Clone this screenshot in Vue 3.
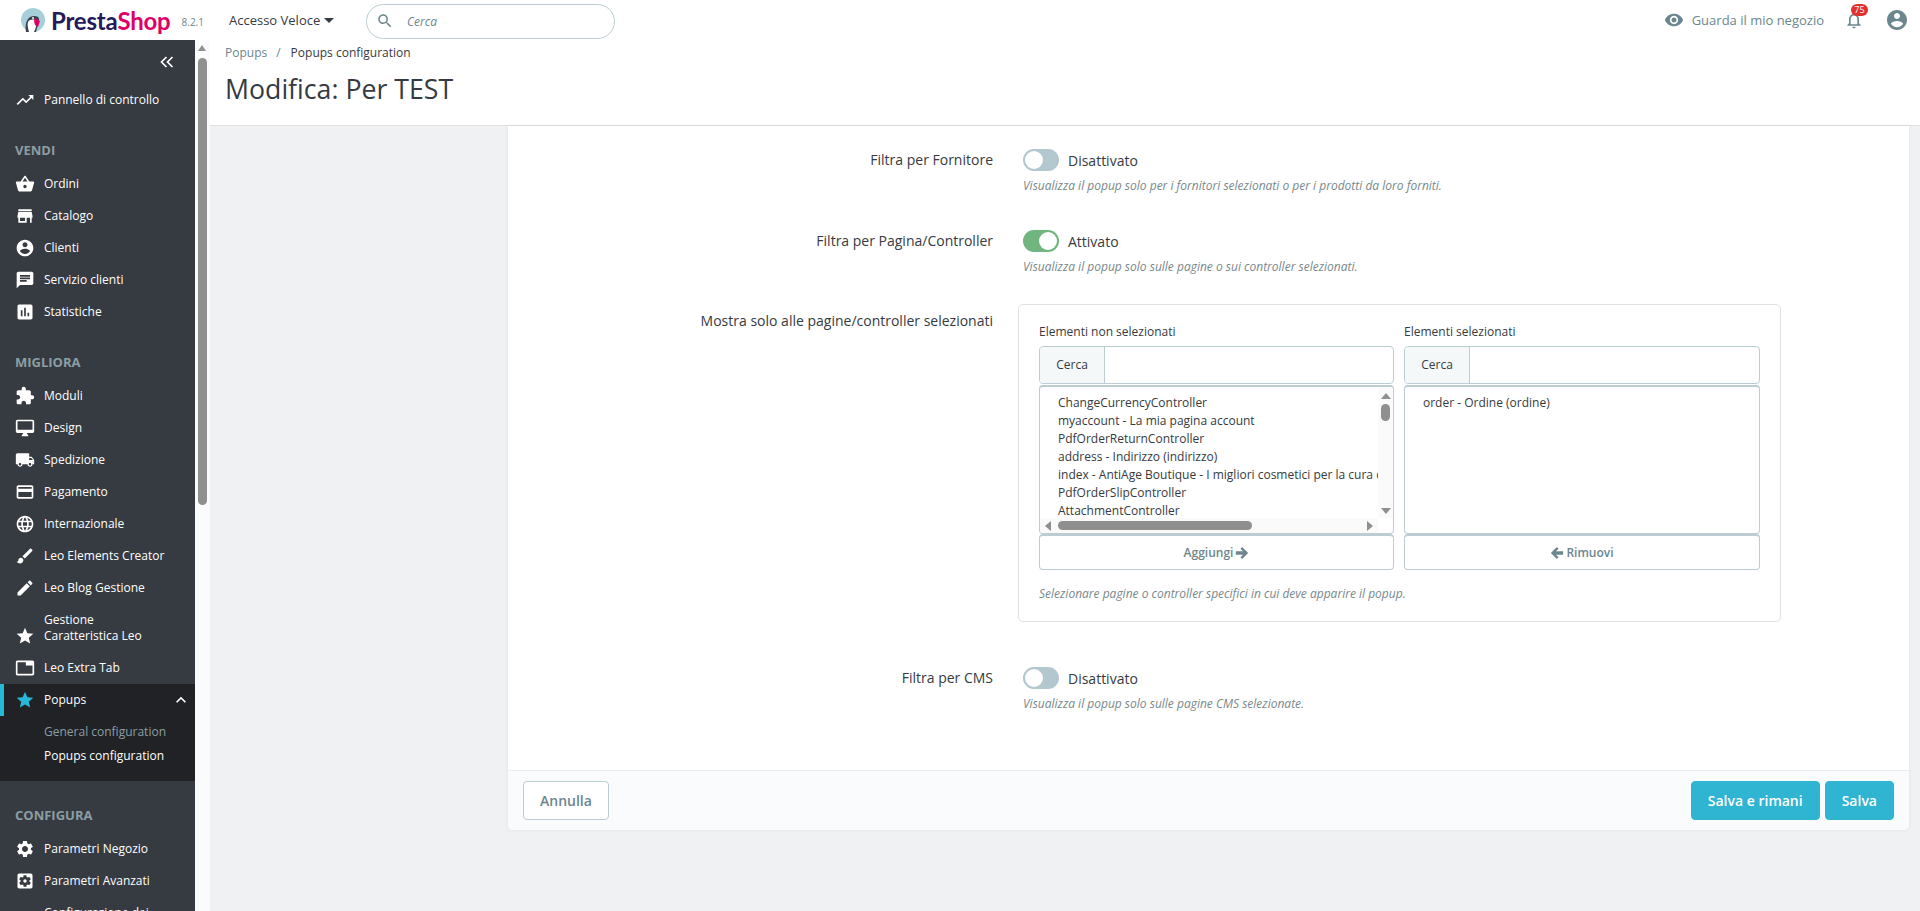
<template>
  <div class="app">
    <header class="topbar">
      <div class="logo">
        <svg class="puffin" width="24" height="24" viewBox="0 0 24 24">
          <circle cx="12" cy="12" r="12" fill="#a5d0da" />
          <path d="M5 24c-1-6 0-10 2-13 2-3 7-4 10-2 1 1 1 2 1 3l-3 12z" fill="#3b3f4a" />
          <path d="M7 14c2-3 6-3 8-1 1 3 0 7-2 11H8c-1-4-2-7-1-10z" fill="#fff" />
          <path d="M14 10l5 3-2 6-3-2-1-4z" fill="#df0067" />
          <circle cx="12" cy="10" r="1" fill="#fff" />
        </svg>
        <span class="logo-text"><span class="presta">Presta</span><span class="shop">Shop</span></span>
        <span class="version">8.2.1</span>
      </div>
      <div class="quick">Accesso Veloce<span class="caret"></span></div>
      <div class="search">
        <svg width="18" height="18" viewBox="0 0 24 24"><path :d="icons.search" fill="#6c868e" /></svg>
        <span>Cerca</span>
      </div>
      <div class="top-right">
        <svg class="eye" width="20" height="20" viewBox="0 0 24 24"><path :d="icons.eye" fill="#6c868e" /></svg>
        <span class="shop-link">Guarda il mio negozio</span>
        <div class="bell">
          <svg width="20" height="20" viewBox="0 0 24 24"><path :d="icons.bell" fill="#6c868e" /></svg>
          <span class="badge">75</span>
        </div>
        <svg class="account" width="24" height="24" viewBox="0 0 24 24"><path :d="icons.account" fill="#6c868e" /></svg>
      </div>
    </header>

    <div class="below">
      <aside class="sidebar">
        <div class="collapse">
          <svg width="16" height="16" viewBox="0 0 16 16" fill="none" stroke="#fff" stroke-width="1.7"><path d="M7.5 3L2.5 8l5 5M13.5 3l-5 5 5 5" /></svg>
        </div>
        <template v-for="entry in nav" :key="entry.label">
          <div v-if="entry.section" class="section">{{ entry.label }}</div>
          <div v-else class="nav-item" :class="{ active: entry.active, tall: entry.tall }">
            <svg width="20" height="20" viewBox="0 0 24 24"><path :d="icons[entry.icon]" fill="currentColor" /></svg>
            <span>{{ entry.label }}</span>
            <svg v-if="entry.active" class="chev" width="20" height="20" viewBox="0 0 24 24"><path :d="icons.up" fill="#fff" /></svg>
          </div>
          <div v-if="entry.active" class="submenu">
            <div class="sub muted">General configuration</div>
            <div class="sub">Popups configuration</div>
          </div>
        </template>
      </aside>
      <div class="side-scroll">
        <span class="arrow-up"></span>
        <span class="side-thumb"></span>
      </div>

      <main class="main">
        <div class="page-head">
          <div class="crumbs"><span class="crumb-link">Popups</span><span class="slash">/</span><span>Popups configuration</span></div>
          <h1>Modifica: Per TEST</h1>
        </div>
        <div class="content">
          <div class="card">
            <div class="form">
              <div class="row">
                <label>Filtra per Fornitore</label>
                <div class="control">
                  <div class="switch-line"><span class="switch"></span>Disattivato</div>
                  <p class="help">Visualizza il popup solo per i fornitori selezionati o per i prodotti da loro forniti.</p>
                </div>
              </div>
              <div class="row second">
                <label>Filtra per Pagina/Controller</label>
                <div class="control">
                  <div class="switch-line"><span class="switch on"></span>Attivato</div>
                  <p class="help">Visualizza il popup solo sulle pagine o sui controller selezionati.</p>
                </div>
              </div>
              <div class="row third">
                <label>Mostra solo alle pagine/controller selezionati</label>
                <div class="picker">
                  <div class="columns">
                    <div class="col">
                      <div class="col-title">Elementi non selezionati</div>
                      <div class="group"><span class="addon">Cerca</span><span class="field"></span></div>
                      <div class="list scrolled">
                        <div class="list-view">
                          <div v-for="item in available" :key="item" class="opt">{{ item }}</div>
                        </div>
                        <div class="v-bar">
                          <span class="arr a-up"></span>
                          <span class="v-thumb"></span>
                          <span class="arr a-down"></span>
                        </div>
                        <div class="h-bar">
                          <span class="arr a-left"></span>
                          <span class="h-thumb"></span>
                          <span class="arr a-right"></span>
                        </div>
                      </div>
                      <button class="move">Aggiungi
                        <svg width="14" height="14" viewBox="0 0 16 16"><path d="M8.2 1.2L15 8l-6.8 6.8-2-2L9.2 10H1V6h8.2L6.2 3.2z" fill="currentColor" /></svg>
                      </button>
                    </div>
                    <div class="col">
                      <div class="col-title">Elementi selezionati</div>
                      <div class="group"><span class="addon">Cerca</span><span class="field"></span></div>
                      <div class="list">
                        <div class="list-view"><div class="opt">order - Ordine (ordine)</div></div>
                      </div>
                      <button class="move">
                        <svg width="14" height="14" viewBox="0 0 16 16"><path d="M7.8 1.2L1 8l6.8 6.8 2-2L6.8 10H15V6H6.8l3-2.8z" fill="currentColor" /></svg>
                        Rimuovi
                      </button>
                    </div>
                  </div>
                  <p class="help picker-help">Selezionare pagine o controller specifici in cui deve apparire il popup.</p>
                </div>
              </div>
              <div class="row fourth">
                <label>Filtra per CMS</label>
                <div class="control">
                  <div class="switch-line"><span class="switch"></span>Disattivato</div>
                  <p class="help">Visualizza il popup solo sulle pagine CMS selezionate.</p>
                </div>
              </div>
            </div>
            <div class="card-footer">
              <button class="btn ghost">Annulla</button>
              <div class="actions">
                <button class="btn primary">Salva e rimani</button>
                <button class="btn primary">Salva</button>
              </div>
            </div>
          </div>
        </div>
      </main>
    </div>
  </div>
</template>

<script setup>
const icons = {
  search: 'M15.5 14h-.79l-.28-.27C15.41 12.59 16 11.11 16 9.5 16 5.91 13.09 3 9.5 3S3 5.91 3 9.5 5.91 16 9.5 16c1.61 0 3.09-.59 4.23-1.57l.27.28v.79l5 4.99L20.49 19l-4.99-5zm-6 0C7.01 14 5 11.99 5 9.5S7.01 5 9.5 5 14 7.01 14 9.5 11.99 14 9.5 14z',
  eye: 'M12 4.5C7 4.5 2.73 7.61 1 12c1.73 4.39 6 7.5 11 7.5s9.27-3.11 11-7.5c-1.73-4.39-6-7.5-11-7.5zM12 17c-2.76 0-5-2.24-5-5s2.24-5 5-5 5 2.24 5 5-2.24 5-5 5zm0-8c-1.66 0-3 1.34-3 3s1.34 3 3 3 3-1.34 3-3-1.34-3-3-3z',
  bell: 'M12 22c1.1 0 2-.9 2-2h-4c0 1.1.9 2 2 2zm6-6v-5c0-3.07-1.63-5.64-4.5-6.32V4c0-.83-.67-1.5-1.5-1.5s-1.5.67-1.5 1.5v.68C7.64 5.36 6 7.92 6 11v5l-2 2v1h16v-1l-2-2zm-2 1H8v-6c0-2.48 1.51-4.5 4-4.5s4 2.02 4 4.5v6z',
  account: 'M12 2C6.48 2 2 6.48 2 12s4.48 10 10 10 10-4.48 10-10S17.52 2 12 2zm0 3c1.66 0 3 1.34 3 3s-1.34 3-3 3-3-1.34-3-3 1.34-3 3-3zm0 14.2c-2.5 0-4.71-1.28-6-3.22.03-1.99 4-3.08 6-3.08 1.99 0 5.97 1.09 6 3.08-1.29 1.94-3.5 3.22-6 3.22z',
  up: 'M7.41 15.41L12 10.83l4.59 4.58L18 14l-6-6-6 6z',
  trend: 'M16 6l2.29 2.29-4.88 4.88-4-4L2 16.59 3.41 18l6-6 4 4 6.3-6.29L22 12V6z',
  basket: 'M17.21 9l-4.38-6.56c-.19-.28-.51-.42-.83-.42-.32 0-.64.14-.83.43L6.79 9H2c-.55 0-1 .45-1 1 0 .09.01.18.04.27l2.54 9.27c.23.84 1 1.46 1.92 1.46h13c.92 0 1.69-.62 1.93-1.46l2.54-9.27L23 10c0-.55-.45-1-1-1h-4.79zM9 9l3-4.4L15 9H9zm3 8c-1.1 0-2-.9-2-2s.9-2 2-2 2 .9 2 2-.9 2-2 2z',
  store: 'M20 4H4v2h16V4zm1 10v-2l-1-5H4l-1 5v2h1v6h10v-6h4v6h2v-6h1zm-9 4H6v-4h6v4z',
  chat: 'M20 2H4c-1.1 0-1.99.9-1.99 2L2 22l4-4h14c1.1 0 2-.9 2-2V4c0-1.1-.9-2-2-2zM6 9h12v2H6V9zm8 5H6v-2h8v2zm4-6H6V6h12v2z',
  stats: 'M19 3H5c-1.1 0-2 .9-2 2v14c0 1.1.9 2 2 2h14c1.1 0 2-.9 2-2V5c0-1.1-.9-2-2-2zM9 17H7v-7h2v7zm4 0h-2V7h2v10zm4 0h-2v-4h2v4z',
  puzzle: 'M20.5 11H19V7c0-1.1-.9-2-2-2h-4V3.5C13 2.12 11.88 1 10.5 1S8 2.12 8 3.5V5H4c-1.1 0-1.99.9-1.99 2v3.8H3.5c1.49 0 2.7 1.21 2.7 2.7s-1.21 2.7-2.7 2.7H2V20c0 1.1.9 2 2 2h3.8v-1.5c0-1.49 1.21-2.7 2.7-2.7 1.49 0 2.7 1.21 2.7 2.7V22H17c1.1 0 2-.9 2-2v-4h1.5c1.38 0 2.5-1.12 2.5-2.5S21.88 11 20.5 11z',
  desktop: 'M21 2H3c-1.1 0-2 .9-2 2v12c0 1.1.9 2 2 2h7l-2 3v1h8v-1l-2-3h7c1.1 0 2-.9 2-2V4c0-1.1-.9-2-2-2zm0 12H3V4h18v10z',
  truck: 'M20 8h-3V4H3c-1.1 0-2 .9-2 2v11h2c0 1.66 1.34 3 3 3s3-1.34 3-3h6c0 1.66 1.34 3 3 3s3-1.34 3-3h2v-5l-3-4zM6 18.5c-.83 0-1.5-.67-1.5-1.5s.67-1.5 1.5-1.5 1.5.67 1.5 1.5-.67 1.5-1.5 1.5zm13.5-9l1.96 2.5H17V9.5h2.5zm-1.5 9c-.83 0-1.5-.67-1.5-1.5s.67-1.5 1.5-1.5 1.5.67 1.5 1.5-.67 1.5-1.5 1.5z',
  card: 'M20 4H4c-1.11 0-1.99.89-1.99 2L2 18c0 1.11.89 2 2 2h16c1.11 0 2-.89 2-2V6c0-1.11-.89-2-2-2zm0 14H4v-6h16v6zm0-10H4V6h16v2z',
  globe: 'M11.99 2C6.47 2 2 6.48 2 12s4.47 10 9.99 10C17.52 22 22 17.52 22 12S17.52 2 11.99 2zm6.93 6h-2.95c-.32-1.25-.78-2.45-1.38-3.56 1.84.63 3.37 1.91 4.33 3.56zM12 4.04c.83 1.2 1.48 2.53 1.91 3.96h-3.82c.43-1.43 1.08-2.76 1.91-3.96zM4.26 14C4.1 13.36 4 12.69 4 12s.1-1.36.26-2h3.38c-.08.66-.14 1.32-.14 2 0 .68.06 1.34.14 2H4.26zm.82 2h2.95c.32 1.25.78 2.45 1.38 3.56-1.84-.63-3.37-1.9-4.33-3.56zm2.95-8H5.08c.96-1.66 2.49-2.93 4.33-3.56C8.81 5.55 8.35 6.75 8.03 8zM12 19.96c-.83-1.2-1.48-2.53-1.91-3.96h3.82c-.43 1.43-1.08 2.76-1.91 3.96zM14.34 14H9.66c-.09-.66-.16-1.32-.16-2 0-.68.07-1.35.16-2h4.68c.09.65.16 1.32.16 2 0 .68-.07 1.34-.16 2zm.25 5.56c.6-1.11 1.06-2.31 1.38-3.56h2.95c-.96 1.65-2.49 2.93-4.33 3.56zM16.36 14c.08-.66.14-1.32.14-2 0-.68-.06-1.34-.14-2h3.38c.16.64.26 1.31.26 2s-.1 1.36-.26 2h-3.38z',
  brush: 'M7 14c-1.66 0-3 1.34-3 3 0 1.31-1.16 2-2 2 .92 1.22 2.49 2 4 2 2.21 0 4-1.79 4-4 0-1.66-1.34-3-3-3zm13.71-9.37l-1.34-1.34c-.39-.39-1.02-.39-1.41 0L9 12.25 11.75 15l8.96-8.96c.39-.39.39-1.02 0-1.41z',
  edit: 'M3 17.25V21h3.75L17.81 9.94l-3.75-3.75L3 17.25zM20.71 7.04c.39-.39.39-1.02 0-1.41l-2.34-2.34c-.39-.39-1.02-.39-1.41 0l-1.83 1.83 3.75 3.75 1.83-1.83z',
  star: 'M12 17.27L18.18 21l-1.64-7.03L22 9.24l-7.19-.61L12 2 9.19 8.63 2 9.24l5.46 4.73L5.82 21z',
  tab: 'M21 3H3c-1.1 0-2 .9-2 2v14c0 1.1.9 2 2 2h18c1.1 0 2-.9 2-2V5c0-1.1-.9-2-2-2zm0 16H3V5h10v4h8v10z',
  gear: 'M19.14 12.94c.04-.3.06-.61.06-.94 0-.32-.02-.64-.07-.94l2.03-1.58c.18-.14.23-.41.12-.61l-1.92-3.32c-.12-.22-.37-.29-.59-.22l-2.39.96c-.5-.38-1.03-.7-1.62-.94l-.36-2.54c-.04-.24-.24-.41-.48-.41h-3.84c-.24 0-.43.17-.47.41l-.36 2.54c-.59.24-1.13.57-1.62.94l-2.39-.96c-.22-.08-.47 0-.59.22L2.74 8.87c-.12.21-.08.47.12.61l2.03 1.58c-.05.3-.09.63-.09.94s.02.64.07.94l-2.03 1.58c-.18.14-.23.41-.12.61l1.92 3.32c.12.22.37.29.59.22l2.39-.96c.5.38 1.03.7 1.62.94l.36 2.54c.05.24.24.41.48.41h3.84c.24 0 .44-.17.47-.41l.36-2.54c.59-.24 1.13-.56 1.62-.94l2.39.96c.22.08.47 0 .59-.22l1.92-3.32c.12-.22.07-.47-.12-.61l-2.01-1.58zM12 15.6c-1.98 0-3.6-1.62-3.6-3.6s1.62-3.6 3.6-3.6 3.6 1.62 3.6 3.6-1.62 3.6-3.6 3.6z',
  gearbox: 'M12 10c-1.1 0-2 .9-2 2s.9 2 2 2 2-.9 2-2-.9-2-2-2zm7-7H5c-1.11 0-2 .9-2 2v14c0 1.1.89 2 2 2h14c1.11 0 2-.9 2-2V5c0-1.1-.89-2-2-2zm-1.75 9c0 .23-.02.46-.05.68l1.48 1.16c.13.11.17.3.08.45l-1.4 2.42c-.09.15-.27.21-.43.15l-1.74-.7c-.36.28-.76.51-1.18.69l-.26 1.85c-.03.17-.18.3-.35.3h-2.8c-.17 0-.32-.13-.35-.29l-.26-1.85c-.43-.18-.82-.41-1.18-.69l-1.74.7c-.16.06-.34 0-.43-.15l-1.4-2.42c-.09-.15-.05-.34.08-.45l1.48-1.16c-.03-.23-.05-.46-.05-.69 0-.23.02-.46.05-.68l-1.48-1.16c-.13-.11-.17-.3-.08-.45l1.4-2.42c.09-.15.27-.21.43-.15l1.74.7c.36-.28.76-.51 1.18-.69l.26-1.85c.03-.17.18-.3.35-.3h2.8c.17 0 .32.13.35.29l.26 1.85c.43.18.82.41 1.18.69l1.74-.7c.16-.06.34 0 .43.15l1.4 2.42c.09.15.05.34-.08.45l-1.48 1.16c.03.23.05.46.05.69z'
}

const nav = [
  { label: 'Pannello di controllo', icon: 'trend' },
  { label: 'Vendi', section: true },
  { label: 'Ordini', icon: 'basket' },
  { label: 'Catalogo', icon: 'store' },
  { label: 'Clienti', icon: 'account' },
  { label: 'Servizio clienti', icon: 'chat' },
  { label: 'Statistiche', icon: 'stats' },
  { label: 'Migliora', section: true },
  { label: 'Moduli', icon: 'puzzle' },
  { label: 'Design', icon: 'desktop' },
  { label: 'Spedizione', icon: 'truck' },
  { label: 'Pagamento', icon: 'card' },
  { label: 'Internazionale', icon: 'globe' },
  { label: 'Leo Elements Creator', icon: 'brush' },
  { label: 'Leo Blog Gestione', icon: 'edit' },
  { label: 'Gestione Caratteristica Leo', icon: 'star', tall: true },
  { label: 'Leo Extra Tab', icon: 'tab' },
  { label: 'Popups', icon: 'star', active: true },
  { label: 'Configura', section: true },
  { label: 'Parametri Negozio', icon: 'gear' },
  { label: 'Parametri Avanzati', icon: 'gearbox' },
  { label: 'Configurazione dei pagamenti', icon: 'gear', tall: true }
]

const available = [
  'ChangeCurrencyController',
  'myaccount - La mia pagina account',
  'PdfOrderReturnController',
  'address - Indirizzo (indirizzo)',
  'index - AntiAge Boutique - I migliori cosmetici per la cura della pelle',
  'PdfOrderSlipController',
  'AttachmentController'
]
</script>

<style>
html, body {
  margin: 0;
  background: #eff1f2;
}
</style>

<style scoped>
.app {
  height: 911px;
  overflow: hidden;
  font-family: "Open Sans", "Noto Sans", sans-serif;
  font-size: 14px;
  color: #363a41;
}

/* header */
.topbar {
  height: 40px;
  background: #fff;
  display: flex;
  align-items: center;
  position: relative;
}

.logo {
  display: flex;
  align-items: center;
  padding-left: 21px;
  width: 229px;
  box-sizing: border-box;
  flex-shrink: 0;
}

.logo-text {
  margin-left: 6px;
  font-family: Lato, "Open Sans", sans-serif;
  font-size: 24px;
  font-weight: 700;
  letter-spacing: -0.2px;
}

.presta { color: #251b5b; }
.shop { color: #df0067; }

.version {
  margin-left: 11px;
  font-size: 10px;
  color: #6c868e;
  padding-top: 4px;
}

.quick {
  display: flex;
  align-items: center;
  width: 137px;
  flex-shrink: 0;
  font-size: 13px;
  color: #363a41;
}

.caret {
  width: 0;
  height: 0;
  margin-left: 4px;
  border-left: 5px solid transparent;
  border-right: 5px solid transparent;
  border-top: 5px solid #363a41;
}

.search {
  width: 249px;
  height: 35px;
  margin-top: 2px;
  box-sizing: border-box;
  border: 1px solid #bbcdd2;
  border-radius: 18px;
  display: flex;
  align-items: center;
  gap: 13px;
  padding-left: 9px;
  font-size: 12px;
  font-style: italic;
  color: #6c868e;
}

.top-right {
  margin-left: auto;
  display: flex;
  align-items: center;
  padding-right: 11px;
}

.eye { margin-right: 8px; }

.shop-link {
  font-size: 13px;
  color: #6c868e;
}

.bell {
  position: relative;
  margin-left: 20px;
  height: 20px;
}

.badge {
  position: absolute;
  top: -6px;
  right: -4px;
  width: 17px;
  height: 12px;
  background: #e0312f;
  border-radius: 6px;
  color: #fff;
  font-size: 9px;
  line-height: 12px;
  text-align: center;
}

.account { margin-left: 21px; }

.below {
  display: flex;
  height: 871px;
}

/* sidebar */
.sidebar {
  width: 195px;
  flex-shrink: 0;
  background: #363a41;
  color: #fff;
  font-size: 12px;
  overflow: hidden;
}

.collapse {
  height: 44px;
  display: flex;
  justify-content: flex-end;
  align-items: flex-start;
  padding: 14px 20px 0 0;
  box-sizing: border-box;
}

.section {
  height: 52px;
  box-sizing: border-box;
  padding: 25px 0 0 15px;
  line-height: 18px;
  font-size: 13px;
  font-weight: 700;
  text-transform: uppercase;
  color: #8c9ea3;
}

.nav-item {
  height: 32px;
  display: flex;
  align-items: center;
  gap: 9px;
  padding-left: 15px;
  position: relative;
}

.nav-item span { line-height: 16px; }

.nav-item.tall {
  height: 48px;
  align-items: flex-end;
  padding-bottom: 8px;
  box-sizing: border-box;
}

.nav-item.tall svg { margin-bottom: -2px; }

.nav-item.tall span {
  width: 125px;
}

.nav-item.active {
  background: #202226;
}

.nav-item.active::before {
  content: "";
  position: absolute;
  left: 0;
  top: 0;
  bottom: 0;
  width: 4px;
  background: #25b9d7;
}

.nav-item.active > svg:first-child {
  color: #25b9d7;
}

.chev {
  position: absolute;
  right: 4px;
  top: 6px;
}

.submenu {
  background: #202226;
  height: 65px;
  box-sizing: border-box;
  padding: 4px 0 0 44px;
}

.sub {
  line-height: 24px;
  font-size: 12px;
}

.sub.muted { color: #8c9ea3; }

.side-scroll {
  width: 15px;
  flex-shrink: 0;
  background: #fafbfc;
  position: relative;
}

.arrow-up {
  position: absolute;
  left: 3px;
  top: 5px;
  border-left: 4.5px solid transparent;
  border-right: 4.5px solid transparent;
  border-bottom: 6px solid #8f8f8f;
}

.side-thumb {
  position: absolute;
  left: 3px;
  top: 18px;
  width: 9px;
  height: 447px;
  background: #8f8f8f;
  border-radius: 5px;
}

/* main */
.main {
  flex: 1;
  min-width: 0;
  display: flex;
  flex-direction: column;
}

.page-head {
  height: 86px;
  box-sizing: border-box;
  background: #fff;
  border-bottom: 1px solid #dfdfdf;
  padding: 4px 0 0 15px;
}

.crumbs {
  font-size: 12px;
  line-height: 18px;
  color: #363a41;
}

.crumb-link { color: #6c868e; }

.slash {
  margin: 0 10px 0 9px;
  color: #6c868e;
}

h1 {
  margin: 9px 0 0;
  font-size: 26.7px;
  line-height: 36px;
  font-weight: 400;
  color: #363a41;
}

.content {
  flex: 1;
  background: #eff1f2;
  padding: 0 11px 0 298px;
}

.card {
  background: #fff;
  border-radius: 0 0 5px 5px;
  box-shadow: 0 0 4px rgba(0, 0, 0, 0.06);
}

.form {
  padding: 23px 0 56px;
}

.row {
  display: grid;
  grid-template-columns: 485px 1fr;
  column-gap: 25px;
}

.row label {
  text-align: right;
  font-size: 14px;
  line-height: 22px;
  color: #363a41;
}

.row.second { margin-top: 34px; }
.row.third { margin-top: 27px; }
.row.fourth { margin-top: 45px; }
.row.third label { padding-top: 6px; }

.control { padding-left: 5px; }

.switch-line {
  display: flex;
  align-items: center;
  gap: 9px;
  height: 22px;
  font-size: 14px;
  color: #363a41;
}

.switch {
  width: 36px;
  height: 22px;
  border-radius: 11px;
  background: #b3c7cf;
  position: relative;
}

.switch::after {
  content: "";
  position: absolute;
  top: 2px;
  left: 2px;
  width: 18px;
  height: 18px;
  border-radius: 50%;
  background: #fff;
}

.switch.on { background: #70b580; }

.switch.on::after {
  left: 16px;
}

.help {
  margin: 5px 0 0;
  font-size: 12px;
  line-height: 20px;
  font-style: italic;
  color: #78888d;
}

.picker {
  width: 763px;
  height: 318px;
  box-sizing: border-box;
  border: 1px solid #dfe3e4;
  border-radius: 5px;
  padding: 18px 20px 0;
}

.columns {
  display: grid;
  grid-template-columns: 355px 356px;
  column-gap: 10px;
}

.col-title {
  font-size: 12px;
  line-height: 18px;
  color: #363a41;
  margin-bottom: 5px;
}

.group {
  height: 38px;
  box-sizing: border-box;
  border: 1px solid #bbcdd2;
  border-radius: 4px;
  display: flex;
  overflow: hidden;
}

.addon {
  width: 64px;
  background: #f4f8f9;
  border-right: 1px solid #bbcdd2;
  text-align: center;
  font-size: 12px;
  line-height: 36px;
  color: #363a41;
}

.field { flex: 1; }

.list {
  height: 149px;
  margin-top: 1px;
  box-sizing: border-box;
  border: 1px solid #bbcdd2;
  border-top-width: 2px;
  border-radius: 4px;
  position: relative;
  overflow: hidden;
}

.list-view {
  padding: 7px 0 0 18px;
  font-size: 12px;
  line-height: 18px;
  color: #363a41;
  white-space: nowrap;
}

.list.scrolled .list-view {
  width: 320px;
  overflow: hidden;
  height: 124px;
}

.v-bar {
  position: absolute;
  top: 0;
  right: 0;
  bottom: 15px;
  width: 15px;
  background: #fafafa;
}

.h-bar {
  position: absolute;
  left: 0;
  right: 15px;
  bottom: 0;
  height: 15px;
  background: #fafafa;
}

.arr {
  position: absolute;
  width: 0;
  height: 0;
}

.a-up {
  top: 6px;
  left: 2.5px;
  border-left: 5px solid transparent;
  border-right: 5px solid transparent;
  border-bottom: 6px solid #8f8f8f;
}

.a-down {
  bottom: 4px;
  left: 2.5px;
  border-left: 5px solid transparent;
  border-right: 5px solid transparent;
  border-top: 6px solid #8f8f8f;
}

.a-left {
  left: 5px;
  top: 2.5px;
  border-top: 5px solid transparent;
  border-bottom: 5px solid transparent;
  border-right: 6px solid #8f8f8f;
}

.a-right {
  right: 5px;
  top: 2.5px;
  border-top: 5px solid transparent;
  border-bottom: 5px solid transparent;
  border-left: 6px solid #8f8f8f;
}

.v-thumb {
  position: absolute;
  top: 17px;
  left: 3px;
  width: 9px;
  height: 17px;
  border-radius: 5px;
  background: #8f8f8f;
}

.h-thumb {
  position: absolute;
  left: 18px;
  top: 3px;
  width: 194px;
  height: 9px;
  border-radius: 5px;
  background: #8f8f8f;
}

.move {
  display: flex;
  width: 100%;
  height: 36px;
  margin: 0;
  box-sizing: border-box;
  align-items: center;
  justify-content: center;
  gap: 2px;
  background: #fff;
  border: 1px solid #bbcdd2;
  border-top-width: 2px;
  border-radius: 4px;
  font-family: inherit;
  font-size: 12px;
  font-weight: 600;
  color: #6c868e;
}

.picker-help {
  margin-top: 14px;
}

.card-footer {
  height: 60px;
  box-sizing: border-box;
  background: #fafbfc;
  border-top: 1px solid #e9edef;
  border-radius: 0 0 5px 5px;
  display: flex;
  align-items: flex-start;
  justify-content: space-between;
  padding: 10px 15px 0;
}

.actions {
  display: flex;
  gap: 5px;
}

.btn {
  height: 39px;
  box-sizing: border-box;
  border-radius: 4px;
  font-family: inherit;
  font-size: 14px;
  font-weight: 600;
  padding: 0 16px;
}

.ghost {
  background: #fff;
  border: 1px solid #bbcdd2;
  color: #6c868e;
}

.primary {
  background: #2fb5d2;
  border: 1px solid #2fb5d2;
  color: #fff;
}
</style>
